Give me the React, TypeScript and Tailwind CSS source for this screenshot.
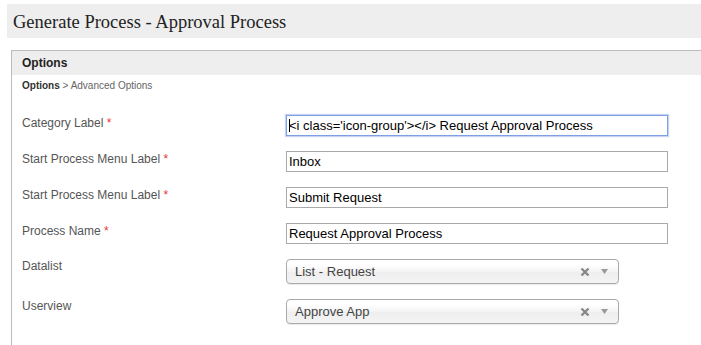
import React from "react";

const Req = () => <span className="text-[#e33]"> *</span>;

function TextRow({ label, value, focused, required = true }: { label: string; value: string; focused?: boolean; required?: boolean }) {
  return (
    <div className="flex items-start">
      <div className="w-[264px] pt-[1px] text-[12px] leading-[14px] text-[#555]">
        {label}
        {required && <Req />}
      </div>
      <div
        className={
          "w-[382px] h-[21px] flex items-center pl-[2px] text-[13px] leading-[15px] text-black bg-white " +
          (focused ? "border border-[#7d9fe3] shadow-[0_0_1px_1px_rgba(130,160,230,0.45)]" : "border border-[#aaa]")
        }
      >
        {focused && <span className="w-px h-[13px] bg-black mr-[-1px]" />}
        <span className="whitespace-pre">{value}</span>
      </div>
    </div>
  );
}

function SelectRow({ label, value }: { label: string; value: string }) {
  return (
    <div className="flex items-start">
      <div className="w-[264px] text-[12px] leading-[14px] text-[#555]">{label}</div>
      <div className="w-[333px] h-[25px] flex items-center rounded-[4px] border border-[#aaa] bg-[linear-gradient(to_bottom,#ffffff_20%,#f4f4f4_50%,#eeeeee_52%,#f4f4f4_100%)] shadow-[0_1px_1px_rgba(0,0,0,0.08)] pl-[8px] pr-[10px]">
        <span className="flex-1 text-[13px] leading-[15px] text-[#444]">{value}</span>
        <svg width="10" height="10" viewBox="0 0 10 10" className="mr-[11px]">
          <path d="M1.5 1.5 L8.5 8.5 M8.5 1.5 L1.5 8.5" stroke="#888" strokeWidth="2.4" strokeLinecap="butt" />
        </svg>
        <svg width="7" height="5" viewBox="0 0 7 5">
          <path d="M0 0 L7 0 L3.5 5 Z" fill="#999" />
        </svg>
      </div>
    </div>
  );
}

export default function App() {
  return (
    <div className="w-[701px] h-[345px] bg-white overflow-hidden font-['Liberation_Sans',Arial,sans-serif]">
      <div className="ml-[7px] mt-[4px] h-[34px] bg-[#eeeeee] flex items-center pl-[6px]">
        <h1 className="font-['Liberation_Serif',Georgia,serif] text-[18.5px] leading-[22px] text-[#222] pt-[1px]">
          Generate Process - Approval Process
        </h1>
      </div>
      <div className="ml-[11px] mt-[12px] border-l border-t border-[#bbbbbb] h-[400px]">
        <div className="h-[24px] bg-[#eeeeee] flex items-center pl-[10px]">
          <span className="text-[12px] font-bold text-[#222]">Options</span>
        </div>
        <div className="pl-[10px] pt-[5px] text-[10px] leading-[12px] text-[#666]">
          <span className="font-bold text-[#333]">Options</span> &gt; Advanced Options
        </div>
        <div className="pl-[10px] mt-[23px] flex flex-col gap-[15px]">
          <TextRow label="Category Label" value="<i class='icon-group'></i> Request Approval Process" focused />
          <TextRow label="Start Process Menu Label" value="Inbox" />
          <TextRow label="Start Process Menu Label" value="Submit Request" />
          <TextRow label="Process Name" value="Request Approval Process" />
          <SelectRow label="Datalist" value="List - Request" />
          <SelectRow label="Userview" value="Approve App" />
        </div>
      </div>
    </div>
  );
}
